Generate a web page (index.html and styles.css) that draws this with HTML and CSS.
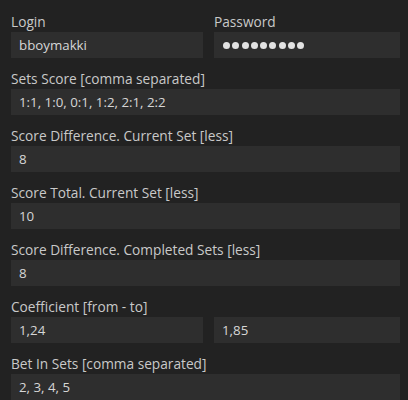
FILE: index.html
```html
<!DOCTYPE html>
<html>
<head>
<meta charset="utf-8">
<link rel="stylesheet" href="styles.css">
</head>
<body>
<div class="form">
  <div class="row">
    <div class="field">
      <div class="label">Login</div>
      <div class="input">bboymakki</div>
    </div>
    <div class="field">
      <div class="label">Password</div>
      <div class="input"><span class="dots"><i></i><i></i><i></i><i></i><i></i><i></i><i></i><i></i><i></i></span></div>
    </div>
  </div>
  <div class="field">
    <div class="label">Sets Score [comma separated]</div>
    <div class="input">1:1, 1:0, 0:1, 1:2, 2:1, 2:2</div>
  </div>
  <div class="field">
    <div class="label">Score Difference. Current Set [less]</div>
    <div class="input">8</div>
  </div>
  <div class="field">
    <div class="label">Score Total. Current Set [less]</div>
    <div class="input">10</div>
  </div>
  <div class="field">
    <div class="label">Score Difference. Completed Sets [less]</div>
    <div class="input">8</div>
  </div>
  <div class="field">
    <div class="label">Coefficient [from - to]</div>
    <div class="row inner">
      <div class="input">1,24</div>
      <div class="input">1,85</div>
    </div>
  </div>
  <div class="field">
    <div class="label">Bet In Sets [comma separated]</div>
    <div class="input">2, 3, 4, 5</div>
  </div>
</div>
</body>
</html>
```
FILE: styles.css
```css
html, body {
  margin: 0;
  padding: 0;
  background: #222222;
  height: 100%;
  overflow: hidden;
}
body {
  font-family: "Open Sans", "Noto Sans", sans-serif;
  font-size: 14px;
}
.form {
  padding: 12px 8px 0 11px;
  display: flex;
  flex-direction: column;
  gap: 11px;
}
.row {
  display: grid;
  grid-template-columns: 192px 1fr;
  column-gap: 11px;
}
.field {
  display: flex;
  flex-direction: column;
}
.label {
  color: #c9c9c9;
  font-size: 13.7px;
  line-height: 20px;
  height: 20px;
  white-space: nowrap;
}
.input {
  background: #2e2e2e;
  height: 26px;
  line-height: 26px;
  padding-left: 8px;
  color: #d6d6d6;
  font-size: 13.3px;
  box-sizing: border-box;
  white-space: nowrap;
}
.dots {
  display: inline-flex;
  gap: 2.25px;
  align-items: center;
  height: 26px;
  vertical-align: top;
  padding-left: 1px;
}
.dots i {
  display: block;
  width: 7px;
  height: 7px;
  border-radius: 50%;
  background: #e2e2e2;
}
```
